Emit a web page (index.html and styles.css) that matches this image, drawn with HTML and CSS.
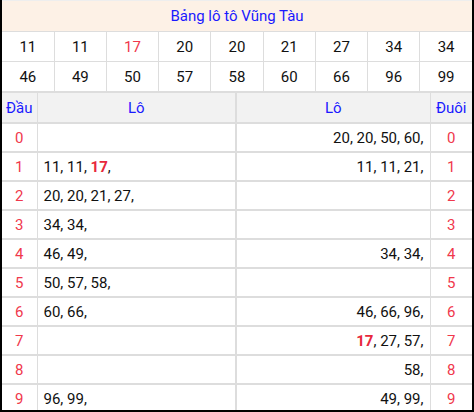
FILE: index.html
```html
<!DOCTYPE html>
<html lang="vi">
<head>
<meta charset="utf-8">
<link rel="stylesheet" href="styles.css">
</head>
<body>
<div class="board">
  <div class="title">Bảng lô tô Vũng Tàu</div>
  <table class="nums">
    <tr><td>11</td><td>11</td><td class="hot">17</td><td>20</td><td>20</td><td>21</td><td>27</td><td>34</td><td>34</td></tr>
    <tr><td>46</td><td>49</td><td>50</td><td>57</td><td>58</td><td>60</td><td>66</td><td>96</td><td>99</td></tr>
  </table>
  <table class="lotos">
    <colgroup><col class="c-dau"><col class="c-lo1"><col class="c-lo2"><col class="c-duoi"></colgroup>
    <tr class="head"><th>Đầu</th><th class="mid">Lô</th><th>Lô</th><th>Đuôi</th></tr>
    <tr><td class="d">0</td><td class="l mid"></td><td class="r">20, 20, 50, 60,</td><td class="d">0</td></tr>
    <tr><td class="d">1</td><td class="l mid">11, 11, <b>17</b>,</td><td class="r">11, 11, 21,</td><td class="d">1</td></tr>
    <tr><td class="d">2</td><td class="l mid">20, 20, 21, 27,</td><td class="r"></td><td class="d">2</td></tr>
    <tr><td class="d">3</td><td class="l mid">34, 34,</td><td class="r"></td><td class="d">3</td></tr>
    <tr><td class="d">4</td><td class="l mid">46, 49,</td><td class="r">34, 34,</td><td class="d">4</td></tr>
    <tr><td class="d">5</td><td class="l mid">50, 57, 58,</td><td class="r"></td><td class="d">5</td></tr>
    <tr><td class="d">6</td><td class="l mid">60, 66,</td><td class="r">46, 66, 96,</td><td class="d">6</td></tr>
    <tr><td class="d">7</td><td class="l mid"></td><td class="r"><b>17</b>, 27, 57,</td><td class="d">7</td></tr>
    <tr><td class="d">8</td><td class="l mid"></td><td class="r">58,</td><td class="d">8</td></tr>
    <tr><td class="d">9</td><td class="l mid">96, 99,</td><td class="r">49, 99,</td><td class="d">9</td></tr>
  </table>
</div>
</body>
</html>
```
FILE: styles.css
```css
html, body {
  margin: 0;
  padding: 0;
  background: #fff;
}
body {
  font-family: Roboto, "Liberation Sans", Arial, sans-serif;
  font-size: 15px;
  color: #111;
}
.board {
  width: 474px;
  height: 412px;
  box-sizing: border-box;
  border-left: 2px solid #000;
  border-right: 2px solid #000;
  border-bottom: 2px solid #000;
  overflow: hidden;
}
.title {
  height: 30px;
  line-height: 30px;
  background: #fdf1e6;
  color: #1a1aff;
  text-align: center;
  border-top: 1px solid #eee;
  border-bottom: 1px solid #ddd;
  box-sizing: content-box;
}
table {
  border-collapse: collapse;
  table-layout: fixed;
  width: 470px;
}
.nums td {
  height: 29px;
  padding: 0;
  text-align: center;
  border-right: 1px solid #ddd;
  border-bottom: 1px solid #ddd;
}
.nums td:last-child { border-right: none; }
.nums tr:last-child td { border-bottom: 2px solid #ddd; }
.nums .hot { color: #f0384c; }
.c-dau { width: 35px; }
.c-lo1 { width: 199px; }
.c-lo2 { width: 194px; }
.c-duoi { width: 42px; }
.lotos th, .lotos td {
  padding: 0;
  border-right: 1px solid #ddd;
  border-bottom: 2px solid #ddd;
}
.lotos th:last-child, .lotos td:last-child { border-right: none; }
.lotos .mid { border-right: 2px solid #ddd; }
.lotos th {
  height: 29px;
  font-weight: normal;
  color: #1a1aff;
  background: #f2f2f2;
  text-align: center;
}
.lotos td { height: 27px; }
.lotos tr:last-child td { border-bottom: none; }
.lotos .d { text-align: center; color: #f0384c; }
.lotos .l { text-align: left; padding-left: 6px; }
.lotos .r { text-align: right; padding-right: 6px; }
.lotos b { color: #e8283c; font-weight: bold; }
```
